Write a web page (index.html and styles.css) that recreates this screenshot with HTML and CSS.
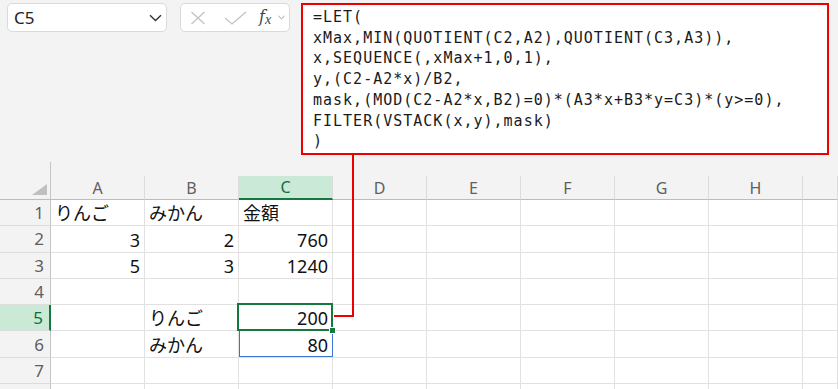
FILE: index.html
```html
<!DOCTYPE html>
<html lang="ja">
<head>
    <meta charset="UTF-8">
    <meta name="viewport" content="width=device-width, initial-scale=1.0">
    <title>LET formula</title>
    <link rel="stylesheet" href="styles.css">
</head>
<body>
    <div class="app">
        <div class="topbar">
            <div class="namebox">
                <span>C5</span>
                <svg class="chev" width="13" height="8" viewBox="0 0 13 8"><path d="M1 1.2 L6.5 6.5 L12 1.2" fill="none" stroke="#333" stroke-width="1.4"/></svg>
            </div>
            <div class="fxbox">
                <svg class="icon-x" width="16" height="14" viewBox="0 0 16 14"><path d="M1.5 1 L14.5 13 M14.5 1 L1.5 13" stroke="#c2c2c2" stroke-width="1.3" fill="none"/></svg>
                <svg class="icon-check" width="23" height="14" viewBox="0 0 23 14"><path d="M1 7 L8 13 L22 1" stroke="#c2c2c2" stroke-width="1.3" fill="none"/></svg>
                <span class="fx"><i>f</i><sub>x</sub></span>
                <svg class="small-chev" width="7" height="5" viewBox="0 0 7 5"><path d="M0.5 1 L3.5 3.8 L6.5 1" fill="none" stroke="#9a9a9a" stroke-width="1"/></svg>
            </div>
            <div class="formula">
<pre>=LET(
xMax,MIN(QUOTIENT(C2,A2),QUOTIENT(C3,A3)),
x,SEQUENCE(,xMax+1,0,1),
y,(C2-A2*x)/B2,
mask,(MOD(C2-A2*x,B2)=0)*(A3*x+B3*y=C3)*(y&gt;=0),
FILTER(VSTACK(x,y),mask)
)</pre>
            </div>
        </div>

        <div class="sheet">
            <div class="corner"></div>
            <div class="colhead">A</div>
            <div class="colhead">B</div>
            <div class="colhead active">C</div>
            <div class="colhead">D</div>
            <div class="colhead">E</div>
            <div class="colhead">F</div>
            <div class="colhead">G</div>
            <div class="colhead">H</div>
            <div class="colhead"></div>

            <div class="rowhead">1</div>
            <div class="cell">りんご</div><div class="cell">みかん</div><div class="cell">金額</div>
            <div class="cell"></div><div class="cell"></div><div class="cell"></div><div class="cell"></div><div class="cell"></div><div class="cell"></div>

            <div class="rowhead">2</div>
            <div class="cell num">3</div><div class="cell num">2</div><div class="cell num">760</div>
            <div class="cell"></div><div class="cell"></div><div class="cell"></div><div class="cell"></div><div class="cell"></div><div class="cell"></div>

            <div class="rowhead">3</div>
            <div class="cell num">5</div><div class="cell num">3</div><div class="cell num">1240</div>
            <div class="cell"></div><div class="cell"></div><div class="cell"></div><div class="cell"></div><div class="cell"></div><div class="cell"></div>

            <div class="rowhead">4</div>
            <div class="cell"></div><div class="cell"></div><div class="cell"></div>
            <div class="cell"></div><div class="cell"></div><div class="cell"></div><div class="cell"></div><div class="cell"></div><div class="cell"></div>

            <div class="rowhead active">5</div>
            <div class="cell"></div><div class="cell">りんご</div><div class="cell num selected">200</div>
            <div class="cell"></div><div class="cell"></div><div class="cell"></div><div class="cell"></div><div class="cell"></div><div class="cell"></div>

            <div class="rowhead">6</div>
            <div class="cell"></div><div class="cell">みかん</div><div class="cell num spill">80</div>
            <div class="cell"></div><div class="cell"></div><div class="cell"></div><div class="cell"></div><div class="cell"></div><div class="cell"></div>

            <div class="rowhead">7</div>
            <div class="cell"></div><div class="cell"></div><div class="cell"></div>
            <div class="cell"></div><div class="cell"></div><div class="cell"></div><div class="cell"></div><div class="cell"></div><div class="cell"></div>

            <div class="rowhead"></div>
            <div class="cell"></div><div class="cell"></div><div class="cell"></div>
            <div class="cell"></div><div class="cell"></div><div class="cell"></div><div class="cell"></div><div class="cell"></div><div class="cell"></div>
        </div>

        <!-- callout from formula box to C5 -->
        <div class="link-v"></div>
        <div class="link-h"></div>
    </div>
</body>
</html>
```

FILE: styles.css
```css
body {
    margin: 0;
    background-color: #fff;
    font-family: "Noto Sans", "Noto Sans CJK JP", sans-serif;
    color: #111;
}
.app {
    position: relative;
    width: 838px;
    height: 389px;
    overflow: hidden;
}
.topbar {
    display: flex;
    align-items: flex-start;
    height: 176px;
    box-sizing: border-box;
    padding: 3px 0 0 7px;
    background-color: #f3f3f3;
}
.namebox {
    display: flex;
    align-items: center;
    justify-content: space-between;
    width: 160px;
    height: 29px;
    box-sizing: border-box;
    padding: 0 4px 0 6px;
    background-color: #fff;
    border: 1px solid #dadada;
    border-radius: 5px;
    font-size: 17px;
    color: #222;
}
.namebox .chev {
    margin-top: 1px;
}
.fxbox {
    display: flex;
    align-items: center;
    width: 110px;
    height: 29px;
    box-sizing: border-box;
    margin-left: 13px;
    padding-left: 9px;
    background-color: #fff;
    border: 1px solid #dadada;
    border-radius: 5px;
}
.icon-check {
    margin-left: 18px;
}
.fx {
    margin-left: 12px;
    font-family: "DejaVu Serif", serif;
    font-size: 16px;
    color: #444;
    line-height: 1;
}
.fx sub {
    font-family: "Liberation Serif", serif;
    font-style: italic;
    font-size: 14px;
    vertical-align: -2px;
}
.small-chev {
    margin-left: 7px;
}
.formula {
    width: 528px;
    height: 152px;
    box-sizing: border-box;
    margin-left: 11px;
    padding: 2px 0 0 10px;
    background-color: #fff;
    border: 2px solid #ee0000;
}
.formula pre {
    margin: 0;
    font-family: "DejaVu Sans Mono", monospace;
    font-size: 15px;
    letter-spacing: 1px;
    line-height: 20.7px;
    color: #1a1a1a;
}

.sheet {
    display: grid;
    grid-template-columns: 51px repeat(8, 94px) 1fr;
    grid-template-rows: 24px repeat(8, 26.3px);
}
.corner {
    position: relative;
    background-color: #f3f3f3;
    border-right: 1px solid #c4c4c4;
    border-bottom: 1px solid #bcbcbc;
}
.corner::before {
    content: "";
    position: absolute;
    right: -1px;
    top: -14px;
    height: 14px;
    border-right: 1px solid #c4c4c4;
}
.corner::after {
    content: "";
    position: absolute;
    right: 3px;
    bottom: 4px;
    border-left: 15px solid transparent;
    border-bottom: 11px solid #c0c0c0;
}
.colhead {
    display: flex;
    align-items: center;
    justify-content: center;
    background-color: #f3f3f3;
    border-right: 1px solid #dcdcdc;
    border-bottom: 1px solid #bcbcbc;
    font-size: 16px;
    color: #5f5f5f;
}
.colhead.active {
    background-color: #cae9d7;
    color: #10703d;
    border-bottom: 2px solid #15793f;
}
.rowhead {
    display: flex;
    align-items: center;
    justify-content: flex-end;
    padding-right: 6px;
    background-color: #f3f3f3;
    border-right: 1px solid #c4c4c4;
    border-bottom: 1px solid #dcdcdc;
    font-size: 17px;
    color: #5f5f5f;
}
.rowhead.active {
    background-color: #cae9d7;
    color: #10703d;
    border-right: 2px solid #15793f;
}
.cell {
    display: flex;
    align-items: flex-end;
    padding: 0 4px 0 4px;
    border-right: 1px solid #e1e1e1;
    border-bottom: 1px solid #e1e1e1;
    font-size: 18px;
    line-height: 24px;
    white-space: nowrap;
    color: #111;
}
.cell.num {
    justify-content: flex-end;
}
.cell.selected {
    position: relative;
}
.cell.selected::before {
    content: "";
    position: absolute;
    left: -2px;
    top: -2px;
    right: -1px;
    bottom: -1px;
    border: 2px solid #15793f;
}
.cell.selected::after {
    content: "";
    position: absolute;
    right: -4px;
    bottom: -4px;
    width: 5px;
    height: 5px;
    background-color: #15793f;
    border: 1px solid #fff;
    z-index: 2;
}
.cell.spill {
    position: relative;
}
.cell.spill::before {
    content: "";
    position: absolute;
    left: 0;
    top: 0;
    right: -1px;
    bottom: 0;
    border: 1px solid #3a74d4;
    border-top: none;
}
.link-v {
    position: absolute;
    left: 352px;
    top: 155px;
    width: 2px;
    height: 162px;
    background-color: #ee0000;
}
.link-h {
    position: absolute;
    left: 334px;
    top: 315px;
    width: 20px;
    height: 2px;
    background-color: #ee0000;
}
```
